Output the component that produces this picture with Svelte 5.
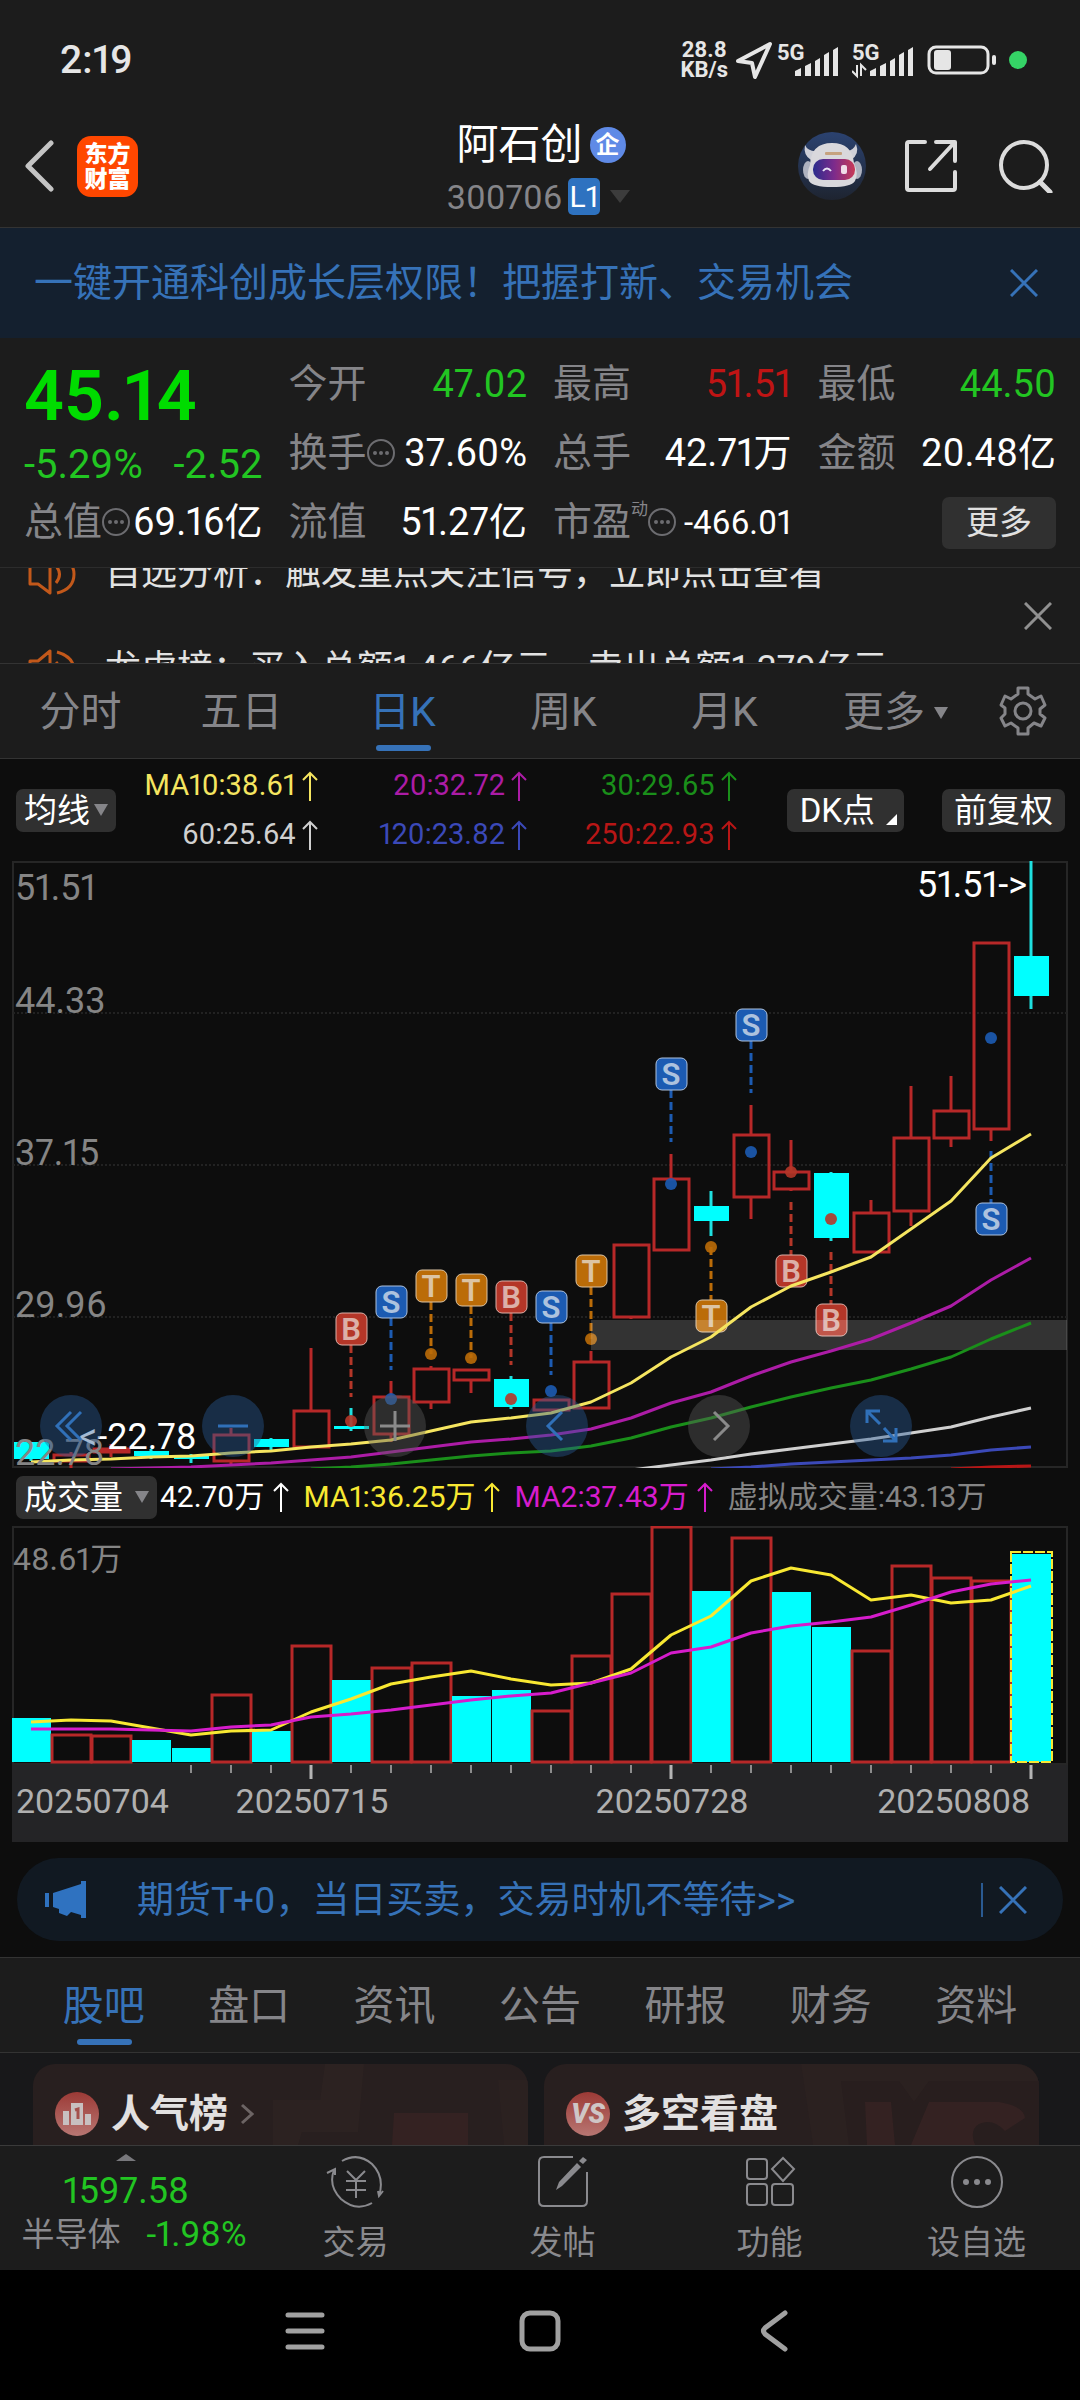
<script>
  const UP = 'up';
  const DOWN = 'down';

  // [direction, body top, body bottom, wick top, wick bottom]
  const candles = [
    [DOWN, 581, 598, 581, 600],
    [UP, 594, 600, 591, 607],
    [UP, 588, 591, 583, 596],
    [DOWN, 590, 595, 588, 598],
    [DOWN, 595, 598, 593, 602],
    [UP, 574, 600, 567, 603],
    [DOWN, 578, 586, 577, 590],
    [UP, 550, 586, 487, 587],
    [DOWN, 565, 568, 547, 570],
    [UP, 536, 573, 520, 581],
    [UP, 508, 541, 505, 548],
    [UP, 509, 519, 509, 532],
    [DOWN, 518, 546, 515, 548],
    [UP, 539, 549, 539, 549],
    [UP, 501, 547, 490, 547],
    [UP, 384, 456, 384, 458],
    [UP, 318, 389, 293, 389],
    [DOWN, 345, 360, 330, 375],
    [UP, 274, 336, 244, 358],
    [UP, 311, 328, 279, 330],
    [DOWN, 312, 377, 311, 380],
    [UP, 352, 391, 339, 391],
    [UP, 277, 350, 225, 365],
    [UP, 250, 277, 215, 286],
    [UP, 82, 268, 82, 280],
    [DOWN, 95, 135, 0, 148]
  ];

  const cx = (i) => 19 + i * 40;
  const path = (values, from = 0) => values.map((v, n) => `${cx(from + n)},${v}`).join(' ');

  const averages = [
    ['ma10', path([601, 599, 598, 596, 595, 592, 590, 586, 583, 579, 570, 561, 557, 552, 541, 522, 496, 476, 446, 425, 411, 396, 368, 340, 297, 273])],
    ['ma20', path([608, 607, 606, 604, 602, 599, 596, 591, 586, 581, 578, 574, 568, 557, 542, 531, 515, 501, 490, 478, 462, 445, 419, 397], 2)],
    ['ma30', path([608, 606, 603, 599, 595, 592, 590, 585, 577, 566, 557, 546, 536, 527, 519, 508, 496, 478, 462], 7)],
    ['ma60', path([609, 604, 599, 593, 588, 583, 578, 572, 566, 556, 547], 15)],
    ['ma120', path([608, 606, 603, 601, 599, 597, 594, 589, 586], 17)],
    ['ma250', path([608, 606, 605], 23)]
  ];

  // i: session index, y: badge centre, from/to: dashed leader, dot: trade point
  const markers = [
    { i: 8, kind: 'B', y: 468, from: 484, to: 536, dot: 560 },
    { i: 9, kind: 'S', y: 441, from: 457, to: 509, dot: 538 },
    { i: 10, kind: 'T', y: 425, from: 441, to: 493, dot: 493 },
    { i: 11, kind: 'T', y: 429, from: 445, to: 497, dot: 497 },
    { i: 12, kind: 'B', y: 436, from: 452, to: 504, dot: 538 },
    { i: 13, kind: 'S', y: 446, from: 462, to: 514, dot: 530 },
    { i: 14, kind: 'T', y: 410, from: 426, to: 478, dot: 478 },
    { i: 16, kind: 'S', y: 213, from: 229, to: 281, dot: 323 },
    { i: 17, kind: 'T', y: 455, from: 386, to: 439, dot: 386 },
    { i: 18, kind: 'S', y: 164, from: 180, to: 232, dot: 291 },
    { i: 19, kind: 'B', y: 410, from: 341, to: 394, dot: 311 },
    { i: 20, kind: 'B', y: 459, from: 391, to: 443, dot: 358 },
    { i: 24, kind: 'S', y: 358, from: 290, to: 342, dot: 177 }
  ];

  const volumes = [192, 209, 210, 214, 222, 169, 205, 120, 154, 142, 137, 170, 164, 185, 130, 68, 1, 65, 12, 66, 101, 125, 40, 52, 55, 28];
  const volDown = [0, 3, 4, 6, 8, 11, 12, 17, 19, 20, 25];
  const volMa1 = path([196, 194, 195, 202, 209, 205, 204, 186, 173, 158, 151, 145, 153, 159, 157, 143, 109, 90, 55, 42, 49, 74, 69, 77, 74, 60]);
  const volMa2 = path([203, 203, 203, 204, 205, 201, 199, 191, 188, 184, 179, 174, 170, 167, 157, 147, 127, 121, 107, 100, 96, 91, 79, 66, 58, 54]);
  const ticks = Array.from({ length: 22 }, (_, n) => n + 4);

  const legend = [
    ['ma10', 'MA10:38.61'],
    ['ma20', '20:32.72'],
    ['ma30', '30:29.65'],
    ['ma60', '60:25.64'],
    ['ma120', '120:23.82'],
    ['ma250', '250:22.93']
  ];
  const periods = ['分时', '五日', '日K', '周K', '月K'];
  const sections = ['股吧', '盘口', '资讯', '公告', '研报', '财务', '资料'];
  const news = ['自选分析：触发重点关注信号，立即点击查看', '龙虎榜：买入总额1.466亿元，卖出总额1.379亿元'];
</script>

{#snippet more()}
  <svg class="dots" viewBox="0 0 28 28" aria-hidden="true">
    <circle cx="14" cy="14" r="13" fill="none" stroke="#6c6c70" stroke-width="2" />
    <circle cx="8" cy="14" r="2" fill="#6c6c70" /><circle cx="14" cy="14" r="2" fill="#6c6c70" /><circle cx="20" cy="14" r="2" fill="#6c6c70" />
  </svg>
{/snippet}

{#snippet arrow()}
  <svg class="arrow" viewBox="0 0 16 30" role="img" aria-label="上升">
    <path d="M8 30V2M1 9L8 2L15 9" fill="none" stroke="currentColor" stroke-width="2" />
  </svg>
{/snippet}

{#snippet cross()}
  <svg class="cross" viewBox="0 0 28 28" aria-hidden="true">
    <path d="M1 1L27 27M27 1L1 27" fill="none" stroke="currentColor" stroke-width="3" />
  </svg>
{/snippet}

{#snippet signal()}
  <path d="M0 29V24L6 21V29ZM10 29V19L16 16V29ZM20 29V14L25 11V29ZM29 29V8L34 5V29ZM38 29V3L43 0V29Z" fill="#e6e6e6" />
{/snippet}

<div class="app">
  <div class="status">
    <span class="time">2:19</span>
    <div class="indicators">
      <span class="speed">28.8<br />KB/s</span>
      <svg class="locate" viewBox="0 0 36 38" aria-hidden="true"><path d="M2 20L34 3L19 36L16 22Z" fill="none" stroke="#e6e6e6" stroke-width="4" stroke-linejoin="round" /></svg>
      <svg class="net" viewBox="0 0 62 42" aria-label="5G 信号">
        <text x="0" y="21">5G</text><g transform="translate(18 8)">{@render signal()}</g>
      </svg>
      <svg class="net second" viewBox="0 0 62 42" aria-label="5G 信号">
        <text x="0" y="21">5G</text><g transform="translate(18 8)">{@render signal()}</g>
        <path d="M5 26V37L0 32M9 37V26L14 31" fill="none" stroke="#e6e6e6" stroke-width="2" />
      </svg>
      <svg class="battery" viewBox="0 0 69 30" aria-label="电量">
        <rect x="2" y="2" width="59" height="26" rx="7" fill="none" stroke="#e6e6e6" stroke-width="3" />
        <rect x="7" y="5" width="17" height="20" rx="3" fill="#e6e6e6" />
        <rect x="65" y="10" width="4" height="10" rx="2" fill="#e6e6e6" />
      </svg>
      <span class="active-dot"></span>
    </div>
  </div>

  <header>
    <div class="left">
      <button class="plain" aria-label="返回"><svg class="back" viewBox="0 0 30 52" aria-hidden="true"><path d="M27 3L4 26L27 49" fill="none" stroke="#c4c4c4" stroke-width="5" stroke-linecap="round" stroke-linejoin="round" /></svg></button>
      <span class="brand">东方<br />财富</span>
    </div>
    <div class="title">
      <h1>阿石创<span class="corp">企</span></h1>
      <div class="code">300706<span class="level">L1</span><span class="caret dark"></span></div>
    </div>
    <div class="right">
      <button class="plain" aria-label="智能助手">
        <svg class="robot" viewBox="0 0 68 68" aria-hidden="true">
          <defs>
            <linearGradient id="sky" x1="0" y1="0" x2="0" y2="1"><stop offset="0" stop-color="#2b4270" /><stop offset="1" stop-color="#1e2430" /></linearGradient>
            <linearGradient id="visor" x1="0" y1="0" x2="1" y2="0"><stop offset="0" stop-color="#2a2c8c" /><stop offset=".5" stop-color="#7c2b8c" /><stop offset="1" stop-color="#c83a56" /></linearGradient>
          </defs>
          <circle cx="34" cy="34" r="34" fill="url(#sky)" />
          <ellipse cx="10" cy="38" rx="5" ry="9" fill="#aeb2bf" /><ellipse cx="59" cy="38" rx="5" ry="9" fill="#aeb2bf" />
          <path d="M7 13Q5 23 13 28L20 19Q10 20 7 13ZM58 12Q62 22 53 28L46 19Q55 20 58 12Z" fill="#cfd0d8" />
          <path d="M12 33Q13 11 34 11Q54 11 56 31Q61 42 57 49Q53 55 34 55Q15 55 11 49Q8 42 12 33Z" fill="#d9d8dc" />
          <rect x="27" y="20" width="17" height="3" rx="1" fill="#c6a27f" />
          <rect x="15" y="27" width="42" height="21" rx="10" fill="url(#visor)" />
          <path d="M25 39Q29 34 33 39" fill="none" stroke="#e8e3f4" stroke-width="2" /><rect x="43" y="33" width="6" height="9" rx="2" fill="#f0dce8" />
        </svg>
      </button>
      <button class="plain" aria-label="分享"><svg class="share" viewBox="0 0 54 54" aria-hidden="true"><path d="M21 3H5Q3 3 3 5V49Q3 51 5 51H49Q51 51 51 49V33M32 3H51V22M50 4L26 30" fill="none" stroke="#dcdcdc" stroke-width="4" stroke-linecap="round" stroke-linejoin="round" /></svg></button>
      <button class="plain" aria-label="搜索"><svg class="search" viewBox="0 0 54 54" aria-hidden="true"><circle cx="25" cy="26" r="23" fill="none" stroke="#dcdcdc" stroke-width="4" /><path d="M41 43L51 53" stroke="#dcdcdc" stroke-width="5" stroke-linecap="round" /></svg></button>
    </div>
  </header>

  <div class="banner">
    <a href="#open">一键开通科创成长层权限！把握打新、交易机会</a>
    <button class="plain" aria-label="关闭">{@render cross()}</button>
  </div>

  <section class="quote">
    <div class="col">
      <div class="price">45.14</div>
      <div class="change"><span>-5.29%</span><span>-2.52</span></div>
      <div class="cell"><span class="label">总值{@render more()}</span><span>69.16亿</span></div>
    </div>
    <div class="col">
      <div class="cell"><span class="label">今开</span><span class="green">47.02</span></div>
      <div class="cell"><span class="label">换手{@render more()}</span><span>37.60%</span></div>
      <div class="cell"><span class="label">流值</span><span>51.27亿</span></div>
    </div>
    <div class="col">
      <div class="cell"><span class="label">最高</span><span class="red">51.51</span></div>
      <div class="cell"><span class="label">总手</span><span>42.71万</span></div>
      <div class="cell"><span class="label">市盈<small>动</small>{@render more()}</span><span class="small">-466.01</span></div>
    </div>
    <div class="col">
      <div class="cell"><span class="label">最低</span><span class="green">44.50</span></div>
      <div class="cell"><span class="label">金额</span><span>20.48亿</span></div>
      <div class="cell end"><button class="chip more-btn">更多</button></div>
    </div>
  </section>

  <section class="ticker">
    <ul>
      {#each news as item, n}
        <li>
          <svg class="horn" viewBox="0 0 48 42" aria-hidden="true"><path d="M2 12H10L22 2V40L10 31H2ZM28 13Q35 21 28 30M29 3Q46 8 46 21Q46 36 29 40" fill="none" stroke="#c2581a" stroke-width="3" stroke-linejoin="round" /></svg>
          <span>{item}</span>{#if n === 1}<i class="unread"></i>{/if}
        </li>
      {/each}
    </ul>
    <button class="plain" aria-label="关闭">{@render cross()}</button>
  </section>

  <nav class="periods">
    {#each periods as p}
      <button class="tab" class:on={p === '日K'}>{p}</button>
    {/each}
    <button class="tab menu">更多<span class="caret"></span></button>
    <button class="gear" aria-label="设置">
      <svg viewBox="0 0 48 50" aria-hidden="true"><path d="M19 2H29V8L36 13L42 10L46 19L41 23V28L46 32L42 40L35 37L29 42V48H19V42L12 37L6 40L2 32L6 28V22L2 19L6 10L12 13L19 8Z" fill="none" stroke="#858589" stroke-width="3" stroke-linejoin="round" /><circle cx="24" cy="25" r="8" fill="none" stroke="#858589" stroke-width="3" /></svg>
    </button>
  </nav>

  <main>
    <div class="legend">
      <button class="chip">均线<span class="caret"></span></button>
      <div class="values">
        {#each legend as [name, text]}
          <span class={name}>{text}{@render arrow()}</span>
        {/each}
      </div>
      <button class="chip dk">DK点<svg viewBox="0 0 11 11" aria-hidden="true"><path d="M11 0V11H0Z" fill="#fff" /></svg></button>
      <button class="chip">前复权</button>
    </div>

    <div class="chart">
      <svg viewBox="0 0 1056 607" role="img" aria-label="日K线">
        <rect class="frame" x="1" y="1" width="1054" height="605" />
        {#each [152, 304, 456] as y}<line class="grid" x1="1" x2="1055" y1={y} y2={y} />{/each}
        {#each candles as [dir, top, bottom, hi, lo], i}
          {#if dir === UP}
            <path class="rise" d="M{cx(i)} {hi}V{top}M{cx(i)} {bottom}V{lo}" />
            <rect class="rise" x={cx(i) - 17} y={top} width="35" height={bottom - top} />
          {:else}
            <path class="fall-line" d="M{cx(i)} {hi}V{lo}" />
            <rect class="fall" x={cx(i) - 17} y={top} width="35" height={bottom - top} />
          {/if}
        {/each}
        {#each markers as m}
          <g class="mark {m.kind}">
            <line x1={cx(m.i)} x2={cx(m.i)} y1={m.from} y2={m.to} />
            <circle cx={cx(m.i)} cy={m.dot} r="6" />
            <rect x={cx(m.i) - 15} y={m.y - 16} width="31" height="32" rx="6" />
            <text x={cx(m.i)} y={m.y + 11}>{m.kind}</text>
          </g>
        {/each}
        <rect class="band" x="579" y="459" width="476" height="30" />
        {#each averages as [name, points]}<polyline class="line {name}" {points} />{/each}
        <text class="scale" x="3" y="39">51.51</text>
        <text class="scale" x="3" y="152">44.33</text>
        <text class="scale" x="3" y="304">37.15</text>
        <text class="scale" x="3" y="456">29.96</text>
        <text class="scale" x="3" y="604">22.78</text>
        <text class="extreme" x="1015" y="36" text-anchor="end">51.51-&gt;</text>
        <text class="extreme" x="67" y="588">&lt;-22.78</text>
      </svg>
      <div class="tools">
        <button aria-label="最左"><svg viewBox="0 0 62 62"><path d="M31 17L17 31L31 45M41 17L27 31L41 45" /></svg></button>
        <button aria-label="缩小"><svg viewBox="0 0 62 62"><path d="M16 31H46" /></svg></button>
        <button class="off" aria-label="放大"><svg viewBox="0 0 62 62"><path d="M16 31H46M31 16V46" /></svg></button>
        <button aria-label="左移"><svg viewBox="0 0 62 62"><path d="M36 17L22 31L36 45" /></svg></button>
        <button class="off" aria-label="右移"><svg viewBox="0 0 62 62"><path d="M26 17L40 31L26 45" /></svg></button>
        <button aria-label="全屏"><svg viewBox="0 0 62 62"><path d="M17 28V16H30M18 17L30 29M46 33V46H33M45 45L34 33" /></svg></button>
      </div>
    </div>

    <div class="vol-head">
      <button class="chip">成交量<span class="caret"></span></button>
      <span class="white">42.70万{@render arrow()}</span>
      <span class="yellow">MA1:36.25万{@render arrow()}</span>
      <span class="pink">MA2:37.43万{@render arrow()}</span>
      <span class="dim">虚拟成交量:43.13万</span>
    </div>

    <div class="chart">
      <svg viewBox="0 0 1056 316" role="img" aria-label="成交量">
        <rect x="0" y="239" width="1056" height="77" fill="#242426" />
        <rect class="frame" x="1" y="1" width="1054" height="237" />
        {#each volumes as top, i}
          {#if volDown.includes(i)}
            <rect class="fall" x={cx(i) - 19} y={top} width="39" height={236 - top} />
          {:else}
            <rect class="rise" x={cx(i) - 19} y={top} width="39" height={236 - top} />
          {/if}
        {/each}
        <rect class="forecast" x="999" y="26" width="41" height="210" />
        <polyline class="line yellow" points={volMa1} />
        <polyline class="line pink" points={volMa2} />
        <text class="vol-scale" x="1" y="44">48.61万</text>
        {#each ticks as i}
          {@const major = (i - 7) % 9 === 0}
          <line class="tick" class:major x1={cx(i)} x2={cx(i)} y1="239" y2={major ? 253 : 247} />
        {/each}
        <text class="date" x="4" y="287">20250704</text>
        <text class="date" x="300" y="287" text-anchor="middle">20250715</text>
        <text class="date" x="660" y="287" text-anchor="middle">20250728</text>
        <text class="date" x="1018" y="287" text-anchor="end">20250808</text>
      </svg>
    </div>

    <div class="promo">
      <svg class="mega" viewBox="0 0 42 37" aria-hidden="true"><path d="M0 12H4V26H0ZM8 12L36 3V0H41V37H36V34L26 31L22 35L14 32V28L8 26Z" fill="#2f72c0" /></svg>
      <a href="#futures">期货T+0，当日买卖，交易时机不等待&gt;&gt;</a>
      <button class="plain" aria-label="关闭">{@render cross()}</button>
    </div>
  </main>

  <nav class="sections">
    {#each sections as s, n}<button class="tab" class:on={n === 0}>{s}</button>{/each}
  </nav>

  <div class="cards">
    <a class="card" href="#rank">
      <svg class="deco" viewBox="0 0 260 81" aria-hidden="true"><path d="M57 0L52 36H5V81H30L34 68H90L96 0Z" fill="#2c2221" /><path d="M126 49H200V81H124Z" fill="#342222" /><path d="M230 16H260V81H236Z" fill="#2b2120" /></svg>
      <svg class="badge" viewBox="0 0 44 44" aria-hidden="true"><circle cx="22" cy="22" r="22" fill="url(#coral)" /><defs><linearGradient id="coral" x1="0" y1="0" x2="0" y2="1"><stop offset="0" stop-color="#9c3a36" /><stop offset="1" stop-color="#b87672" /></linearGradient></defs><path d="M8 19H14V33H8ZM16 11H28V33H16ZM30 22H36V33H30Z" fill="#c8c0c0" /><path d="M20 18L23 17V27" fill="none" stroke="#a4504c" stroke-width="3" /></svg>
      <strong>人气榜</strong>
      <svg class="chev" viewBox="0 0 14 22" aria-hidden="true"><path d="M2 2L12 11L2 20" fill="none" stroke="#6c6464" stroke-width="3" /></svg>
    </a>
    <a class="card" href="#versus">
      <svg class="deco" viewBox="0 0 260 81" aria-hidden="true"><path d="M22 0H260V81H34Z" fill="#2b2120" /><path d="M62 17H120L135 38L150 17H260V81H70Z" fill="#281e1e" /><path d="M86 38H112L116 81H88ZM150 38H220Q245 42 246 54L226 67Q214 54 200 60Q190 66 196 81H132Z" fill="#342222" /></svg>
      <span class="badge vs">VS</span>
      <strong>多空看盘</strong>
    </a>
  </div>

  <footer>
    <button class="index">
      <span class="peak"></span>
      <b>1597.58</b>
      <span class="pair"><span>半导体</span><em>-1.98%</em></span>
    </button>
    <button class="act">
      <svg viewBox="0 0 60 54" aria-hidden="true"><path d="M16 6Q32 -3 46 9Q59 22 53 41M57 36L53 41L52 36M46 48Q30 57 15 44Q2 31 8 15M1 18L9 14V20M21 16L30 25L39 16M20 26H40M20 35H40M30 26V43" /></svg>
      <span>交易</span>
    </button>
    <button class="act">
      <svg viewBox="0 0 60 54" aria-hidden="true"><path d="M40 2H11Q6 2 6 7V46Q6 51 11 51H49Q54 51 54 46V17" /><path d="M23 35L26 27L44 8L48 12L29 31ZM46 6L50 2L54 5L50 9Z" fill="#8a8a8e" stroke="none" /></svg>
      <span>发帖</span>
    </button>
    <button class="act">
      <svg viewBox="0 0 60 54" aria-hidden="true"><rect x="7" y="4" width="20" height="20" rx="3" /><rect x="7" y="29" width="20" height="21" rx="3" /><rect x="32" y="29" width="21" height="21" rx="3" /><path d="M43 3L54 14L43 26L32 14Z" /></svg>
      <span>功能</span>
    </button>
    <button class="act">
      <svg viewBox="0 0 60 54" aria-hidden="true"><circle cx="30" cy="27" r="25" /><g fill="#8a8a8e" stroke="none"><circle cx="19" cy="27" r="3" /><circle cx="30" cy="27" r="3" /><circle cx="41" cy="27" r="3" /></g></svg>
      <span>设自选</span>
    </button>
  </footer>

  <nav class="system">
    <button aria-label="最近任务"><svg viewBox="0 0 42 42"><path d="M4 5H38M4 21H38M4 37H38" /></svg></button>
    <button aria-label="主屏幕"><svg viewBox="0 0 42 42"><rect x="3" y="3" width="36" height="36" rx="8" /></svg></button>
    <button aria-label="返回"><svg viewBox="0 0 42 42"><path d="M31 3L11 18Q8 21 11 24L31 39" /></svg></button>
  </nav>
</div>

<style>
  :global(body) {
    background: #000;
  }
  .app {
    background: #1c1c1c;
    color: #fff;
    font-family: Roboto, 'Noto Sans CJK SC', sans-serif;
    font-variant-numeric: proportional-nums;
    font-weight: 400;
    line-height: 1.2;
    overflow: hidden;
  }
  svg {
    display: block;
    flex: none;
  }
  button {
    border: 0;
    margin: 0;
    padding: 0;
    background: none;
    color: inherit;
    font: inherit;
    font-variant-numeric: inherit;
  }
  a {
    color: inherit;
    text-decoration: none;
  }
  .plain {
    flex: none;
  }

  .status {
    display: flex;
    align-items: center;
    justify-content: space-between;
    height: 90px;
    padding: 15px 53px 0 60px;
  }
  .time {
    font-size: 39px;
    font-weight: 500;
    color: #e6e6e6;
  }
  .indicators {
    display: flex;
    align-items: center;
  }
  .speed {
    font-size: 22px;
    line-height: 20px;
    font-weight: 700;
    color: #e6e6e6;
    text-align: center;
  }
  .locate {
    width: 36px;
    margin: 0 5px 0 8px;
  }
  .net {
    width: 62px;
    margin-right: 13px;
  }
  .net text {
    font-size: 22px;
    font-weight: 700;
    fill: #e6e6e6;
  }
  .battery {
    width: 69px;
    margin-right: 13px;
  }
  .active-dot {
    width: 18px;
    height: 18px;
    border-radius: 50%;
    background: #35d366;
  }

  header {
    display: grid;
    grid-template-columns: 1fr auto 1fr;
    align-items: center;
    height: 122px;
    padding: 0 27px 0 24px;
    border-bottom: 1px solid #333;
  }
  .left,
  .right {
    display: flex;
    align-items: center;
  }
  .left {
    gap: 23px;
  }
  .back {
    width: 30px;
  }
  .brand {
    width: 61px;
    padding: 6px 0 5px;
    border-radius: 14px;
    background: #ff4700;
    font-size: 23px;
    line-height: 25px;
    font-weight: 900;
    text-align: center;
  }
  .title {
    display: flex;
    flex-direction: column;
    align-items: center;
    gap: 8px;
    padding-top: 5px;
  }
  h1 {
    display: flex;
    align-items: center;
    gap: 7px;
    margin: 0;
    padding-left: 5px;
    font-size: 42px;
    line-height: 48px;
    font-weight: 400;
  }
  .corp {
    width: 36px;
    border-radius: 50%;
    background: #5f8ae6;
    font-size: 24px;
    line-height: 36px;
    font-weight: 700;
    text-align: center;
  }
  .code {
    display: flex;
    align-items: center;
    color: #858589;
    font-size: 34px;
    line-height: 40px;
  }
  .level {
    width: 32px;
    margin: 0 10px 0 6px;
    border-radius: 5px;
    background: #2e72c0;
    color: #fff;
    font-size: 30px;
    line-height: 37px;
    text-align: center;
  }
  .caret {
    display: inline-block;
    border: 7px solid transparent;
    border-top: 12px solid #858589;
    border-bottom: 0;
  }
  .caret.dark {
    border-width: 13px 10px 0;
    border-top-color: #3c3c3c;
  }
  .right {
    justify-content: flex-end;
  }
  .robot {
    width: 68px;
  }
  .share {
    width: 54px;
    margin: 0 41px 0 38px;
  }
  .search {
    width: 54px;
  }
  .cross {
    width: 28px;
  }

  .banner {
    display: flex;
    align-items: center;
    justify-content: space-between;
    height: 110px;
    padding: 0 42px 0 34px;
    background: #14202f;
    color: #3672b8;
    font-size: 39px;
  }

  .quote {
    display: flex;
    gap: 26px;
    padding: 12px 24px 10px;
    border-bottom: 1px solid #2c2c2c;
    font-size: 38px;
  }
  .col {
    flex: 1 1 0;
    min-width: 0;
  }
  .cell {
    display: flex;
    align-items: center;
    justify-content: space-between;
    height: 69px;
    white-space: nowrap;
  }
  .cell.end {
    justify-content: flex-end;
  }
  .label {
    display: flex;
    align-items: center;
    color: #858589;
    font-size: 39px;
  }
  .label small {
    align-self: flex-start;
    font-size: 17px;
    line-height: 20px;
  }
  .dots {
    width: 28px;
  }
  .small {
    font-size: 33px;
  }
  .price {
    height: 92px;
    color: #00dc00;
    font-size: 70px;
    line-height: 92px;
    font-weight: 600;
  }
  .change {
    display: flex;
    justify-content: space-between;
    color: #22c522;
    font-size: 40px;
    line-height: 46px;
  }
  .green {
    color: #22c522;
  }
  .red {
    color: #c01414;
  }
  .chip {
    display: flex;
    align-items: center;
    justify-content: center;
    height: 43px;
    padding: 0 8px;
    border-radius: 7px;
    background: #303030;
    font-size: 33px;
    line-height: 43px;
    white-space: nowrap;
  }
  .more-btn {
    width: 114px;
    height: 52px;
    color: #e0e0e0;
  }

  .ticker {
    display: flex;
    align-items: center;
    height: 95px;
    padding: 0 28px;
    border-bottom: 1px solid #333;
    overflow: hidden;
    color: #e2e2e2;
  }
  .ticker ul {
    flex: 1;
    align-self: flex-start;
    margin: -42px 0 0;
    padding: 0;
    list-style: none;
    font-size: 36px;
  }
  .ticker li {
    display: flex;
    align-items: center;
    height: 96px;
    white-space: nowrap;
  }
  .horn {
    width: 48px;
    margin-right: 29px;
  }
  .unread {
    width: 14px;
    height: 14px;
    margin-left: auto;
    margin-right: 29px;
    border-radius: 50%;
    background: #c02020;
  }
  .ticker .plain {
    color: #909090;
  }

  .periods,
  .sections {
    display: grid;
    height: 94px;
    border-bottom: 1px solid #333;
    color: #858589;
    font-size: 41px;
  }
  .periods {
    grid-template-columns: repeat(6, 161fr) 114fr;
  }
  .tab {
    position: relative;
    padding-top: 3px;
    white-space: nowrap;
    text-align: center;
  }
  .menu {
    display: flex;
    align-items: center;
    justify-content: flex-end;
    gap: 9px;
    padding-right: 18px;
  }
  .tab.on {
    color: #3672b8;
  }
  .tab.on::after {
    content: '';
    position: absolute;
    left: 50%;
    bottom: 7px;
    width: 55px;
    height: 6px;
    margin-left: -27px;
    border-radius: 3px;
    background: #3672b8;
  }
  .gear {
    display: flex;
    align-items: center;
    justify-content: center;
  }
  .gear svg {
    width: 48px;
  }

  main {
    display: flow-root;
    background: #0d0d0d;
  }
  .legend {
    display: flex;
    align-items: center;
    height: 102px;
    padding: 0 15px 0 16px;
    box-sizing: border-box;
  }
  .legend .caret {
    margin-left: 4px;
  }
  .values {
    flex: 1;
    display: grid;
    grid-template-columns: 201fr 209fr 209fr;
    margin-right: 50px;
    font-size: 29px;
    line-height: 49px;
  }
  .values span {
    display: flex;
    align-items: center;
    justify-content: flex-end;
    gap: 6px;
  }
  .arrow {
    width: 16px;
  }
  .dk {
    gap: 11px;
    margin-right: 38px;
    padding: 0 7px 0 13px;
  }
  .dk svg {
    align-self: flex-end;
    width: 11px;
    margin-bottom: 7px;
  }
  .legend .chip:last-child {
    padding: 0 12px;
  }
  .ma10 { color: #f5e560; }
  .ma20 { color: #ac1ca6; }
  .ma30 { color: #1a8f1a; }
  .ma60 { color: #d0d0d0; }
  .ma120 { color: #3b49b8; }
  .ma250 { color: #b81616; }
  .white { color: #fff; }
  .yellow { color: #f8e832; }
  .pink { color: #d61ccc; }
  .dim { color: #858585; }

  .chart {
    position: relative;
    padding: 0 12px;
  }
  .chart > svg {
    width: 100%;
    overflow: hidden;
  }
  .frame {
    fill: none;
    stroke: #262626;
    stroke-width: 2;
  }
  .grid {
    stroke: #222;
    stroke-width: 2;
    stroke-dasharray: 2 2;
  }
  .rise {
    fill: none;
    stroke: #b72828;
    stroke-width: 3;
  }
  .fall {
    fill: #00ffff;
  }
  .fall-line {
    stroke: #1fe0e0;
    stroke-width: 3;
  }
  .line {
    fill: none;
    stroke: currentColor;
    stroke-width: 3;
    stroke-linejoin: round;
  }
  .band {
    fill: #fff;
    opacity: 0.16;
  }
  .mark line {
    stroke: var(--tone);
    stroke-width: 3;
    stroke-dasharray: 8 4;
  }
  .mark circle {
    fill: var(--tone);
    opacity: 0.9;
  }
  .mark rect {
    fill: var(--tone);
    stroke: var(--pale);
    stroke-width: 1;
  }
  .mark text {
    fill: var(--pale);
    font-size: 31px;
    font-weight: 600;
    text-anchor: middle;
  }
  .S { --tone: #1c5bb2; --pale: #adc2de; }
  .T { --tone: #bb6c08; --pale: #dcc4a4; }
  .B { --tone: #b43628; --pale: #dcb0a8; }
  .scale {
    fill: #858585;
    font-size: 36px;
  }
  .extreme {
    fill: #fff;
    font-size: 36px;
  }
  .vol-scale {
    fill: #858585;
    font-size: 32px;
  }
  .date {
    fill: #b0b0b0;
    font-size: 34px;
    font-variant-numeric: tabular-nums;
  }
  .forecast {
    fill: none;
    stroke: #f8e832;
    stroke-width: 2;
    stroke-dasharray: 10 2;
  }
  .tick {
    stroke: #8c8c8c;
    stroke-width: 2;
  }
  .tick.major {
    stroke: #b4b4b4;
    stroke-width: 3;
  }
  .tools {
    position: absolute;
    left: 40px;
    bottom: 11px;
    display: flex;
    gap: 100px;
  }
  .tools button {
    width: 62px;
    height: 62px;
    border-radius: 50%;
    background: rgba(40, 90, 150, 0.42);
    color: #3070b8;
  }
  .tools .off {
    background: rgba(90, 90, 90, 0.42);
    color: #8a8a8a;
  }
  .tools path {
    fill: none;
    stroke: currentColor;
    stroke-width: 3;
  }

  .vol-head {
    display: flex;
    align-items: center;
    height: 58px;
    padding: 0 16px;
    font-size: 30px;
    white-space: nowrap;
  }
  .vol-head > span {
    display: flex;
    align-items: center;
    gap: 8px;
    margin-right: 15px;
  }
  .vol-head .chip {
    margin-right: 3px;
    padding: 0 8px;
    gap: 12px;
  }

  .promo {
    display: flex;
    align-items: center;
    height: 83px;
    margin: 16px 17px;
    padding: 0 36px 0 28px;
    border-radius: 42px;
    background: #111922;
    color: #3672b8;
    font-size: 37px;
  }
  .mega {
    width: 42px;
    margin-right: 50px;
  }
  .promo a {
    flex: 1;
    padding-top: 4px;
  }
  .promo .plain {
    padding: 3px 0 3px 16px;
    border-left: 2px solid #2a5a92;
  }

  .sections {
    grid-template-columns: repeat(7, 1fr);
    padding: 0 31px;
    border-top: 1px solid #333;
  }

  .cards {
    display: grid;
    grid-template-columns: 1fr 1fr;
    gap: 16px;
    height: 81px;
    padding: 11px 41px 0 33px;
    overflow: hidden;
    background: #18181a;
  }
  .card {
    position: relative;
    display: flex;
    align-items: center;
    gap: 12px;
    height: 100px;
    padding: 0 22px;
    border-radius: 22px 22px 0 0;
    background: #281f1f;
    color: #e2e0e0;
    font-size: 39px;
    overflow: hidden;
  }
  .deco {
    position: absolute;
    top: 0;
    right: 0;
    width: 260px;
  }
  .badge {
    position: relative;
    width: 44px;
    height: 44px;
  }
  .vs {
    border-radius: 50%;
    background: linear-gradient(#9c3a36, #b87672);
    color: #cfc6c6;
    font-size: 27px;
    line-height: 44px;
    font-weight: 900;
    font-style: italic;
    text-align: center;
  }
  .card strong {
    position: relative;
    font-weight: 700;
  }
  .chev {
    width: 14px;
  }

  footer {
    position: relative;
    display: flex;
    height: 124px;
    border-top: 1px solid #3a3a3a;
    background: #1c1c1c;
    color: #8a8a8e;
    font-size: 33px;
  }
  .index {
    display: flex;
    flex: 252 1 0;
    flex-direction: column;
    align-items: center;
    padding-top: 8px;
    line-height: 44px;
  }
  .peak {
    border: 10px solid transparent;
    border-top: 0;
    border-bottom: 7px solid #78787c;
  }
  .index b {
    margin-top: 8px;
    color: #22c522;
    font-size: 36px;
    font-weight: 400;
  }
  .pair {
    display: flex;
    gap: 26px;
    padding-left: 16px;
  }
  .pair em {
    color: #22c522;
    font-style: normal;
    font-size: 35px;
  }
  .act {
    display: flex;
    flex: 207 1 0;
    flex-direction: column;
    align-items: center;
    gap: 12px;
    padding-top: 9px;
    line-height: 44px;
  }
  .act svg {
    width: 60px;
    fill: none;
    stroke: #8a8a8e;
    stroke-width: 2;
  }

  .system {
    display: flex;
    height: 122px;
    padding: 0 187px 8px;
    background: #000;
  }
  .system button {
    display: flex;
    flex: 1;
    align-items: center;
    justify-content: center;
  }
  .system svg {
    width: 42px;
    fill: none;
    stroke: #a0a0a0;
    stroke-width: 5;
    stroke-linecap: round;
  }
</style>
